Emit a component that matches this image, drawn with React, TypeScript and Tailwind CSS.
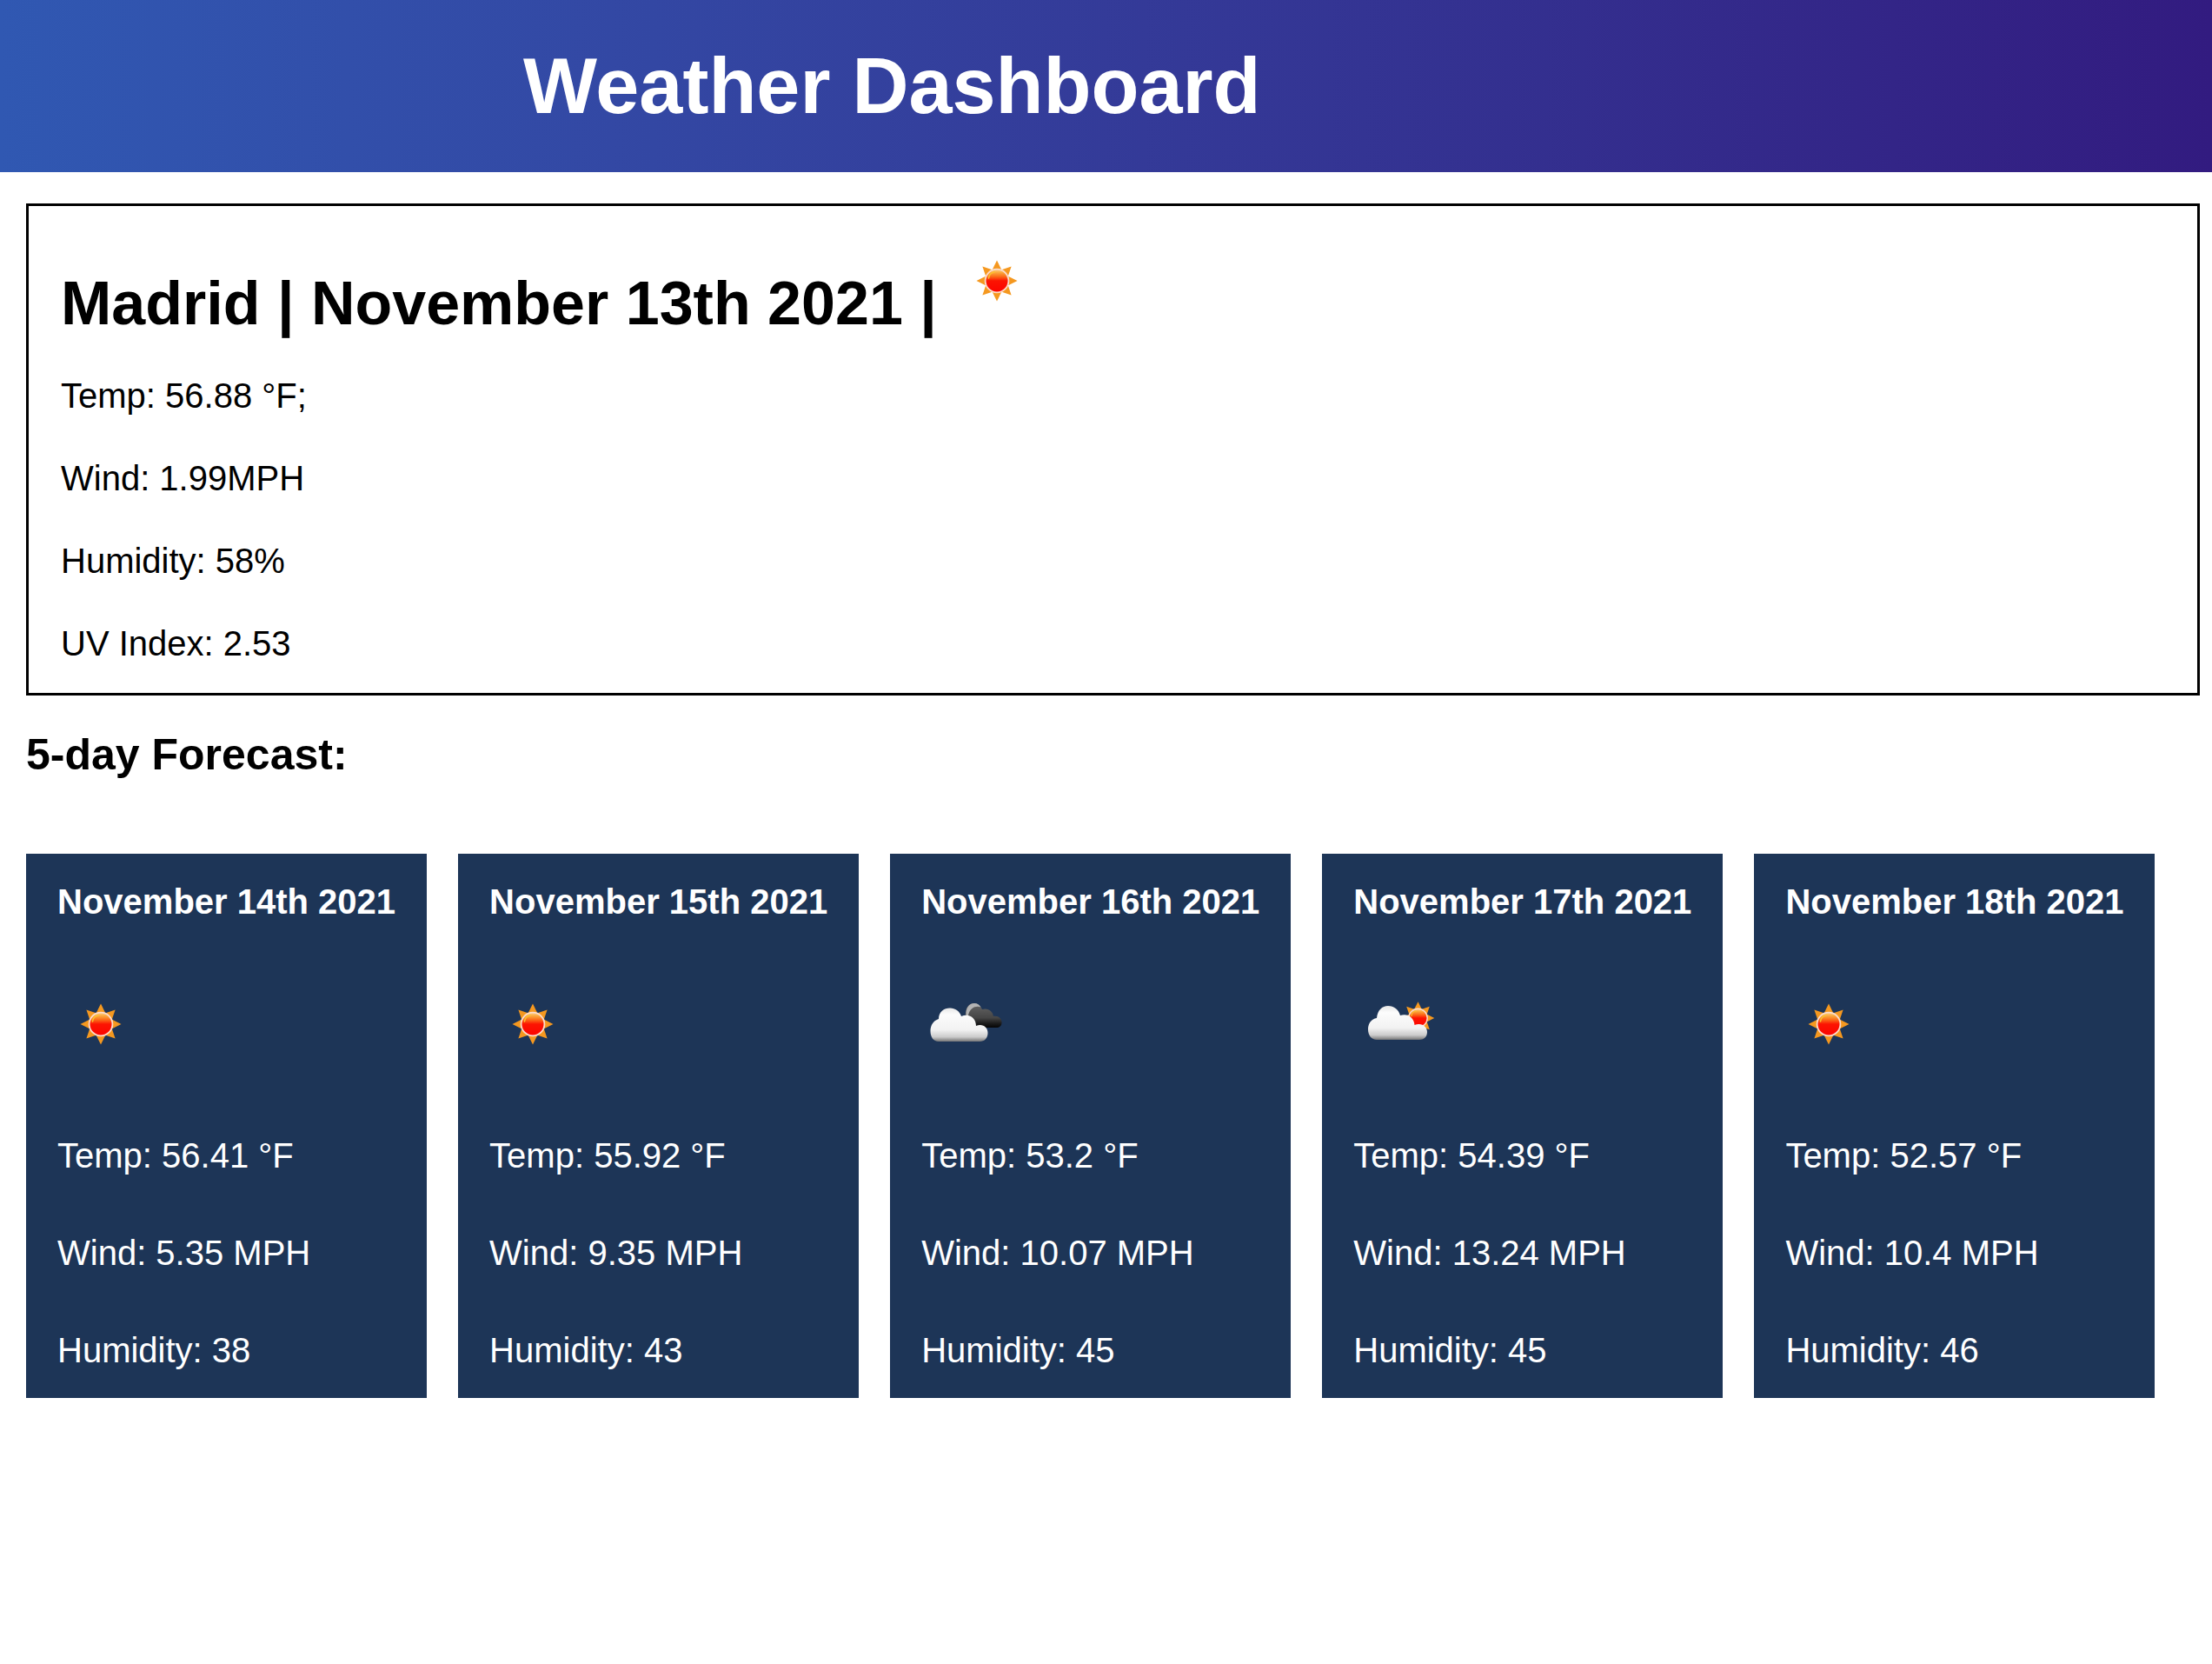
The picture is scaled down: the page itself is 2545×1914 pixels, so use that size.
type Condition = "clear" | "clouds" | "partly";

type Day = {
  date: string;
  condition: Condition;
  temp: string;
  wind: string;
  humidity: string;
};

const forecast: Day[] = [
  { date: "November 14th 2021", condition: "clear", temp: "56.41", wind: "5.35", humidity: "38" },
  { date: "November 15th 2021", condition: "clear", temp: "55.92", wind: "9.35", humidity: "43" },
  { date: "November 16th 2021", condition: "clouds", temp: "53.2", wind: "10.07", humidity: "45" },
  { date: "November 17th 2021", condition: "partly", temp: "54.39", wind: "13.24", humidity: "45" },
  { date: "November 18th 2021", condition: "clear", temp: "52.57", wind: "10.4", humidity: "46" },
];

const rays = [0, 45, 90, 135, 180, 225, 270, 315];

function Sun({ id }: { id: string }) {
  return (
    <g>
      <defs>
        <linearGradient id={id} x1="0" y1="0" x2="0" y2="1">
          <stop offset="0" stopColor="#fdd48a" />
          <stop offset="0.15" stopColor="#fba63c" />
          <stop offset="0.32" stopColor="#fb6a18" />
          <stop offset="0.5" stopColor="#fc1402" />
          <stop offset="1" stopColor="#fc0400" />
        </linearGradient>
      </defs>
      {rays.map((angle) => (
        <path key={angle} d="M-5.2 -13 L0 -23.5 L5.2 -13 Z" fill="#f5981f" transform={`rotate(${angle})`} />
      ))}
      <circle r="13.4" fill={`url(#${id})`} stroke="#fbdccb" strokeWidth="1.8" />
      <path d="M-9.5 -3 C-9 -7.5 -6 -9.5 -3 -10" fill="none" stroke="#fbc02e" strokeWidth="1.5" strokeLinecap="round" />
    </g>
  );
}

function WeatherIcon({ condition, id, className }: { condition: Condition; id: string; className: string }) {
  return (
    <svg viewBox="0 0 100 100" className={className} role="img" aria-label={condition}>
      <defs>
        <linearGradient id={`${id}-white`} x1="0" y1="0" x2="0" y2="1">
          <stop offset="0" stopColor="#e8e8e8" />
          <stop offset="0.2" stopColor="#fcfcfc" />
          <stop offset="0.65" stopColor="#f2f2f2" />
          <stop offset="0.86" stopColor="#cccccc" />
          <stop offset="1" stopColor="#777777" />
        </linearGradient>
        <linearGradient id={`${id}-dark`} x1="0" y1="0" x2="0" y2="1">
          <stop offset="0" stopColor="#666666" />
          <stop offset="0.6" stopColor="#454545" />
          <stop offset="0.82" stopColor="#1c1c1c" />
          <stop offset="1" stopColor="#050505" />
        </linearGradient>
      </defs>
      {condition === "clear" && (
        <g transform="translate(50 50)">
          <Sun id={`${id}-sun`} />
        </g>
      )}
      {condition === "clouds" && (
        <>
          <path
            d="M51 42 C50 32 54 26 61 26 C65 26 68 29 70 33 C77 31 82 35 83 41 C89 40 92.5 44 92.5 48 C92.5 52 90 54 86 54 L66 54 Z"
            fill={`url(#${id}-dark)`}
          />
          <path d="M51.5 40 C50.5 32 55 26 61 26 C64.500 26 67 28 68.500 30.500 C63 28.500 56 31 54 40 Z" fill="#b4b4b4" />
          <path
            d="M20 70 C14 70 10.5 65 10.5 58 C10.5 51 14 46 20 44 C20 36 26 31.5 33 31.5 C39 31.5 44 35 46 41 C55 37 63 43 63 52 C71 49 76.5 54 76.5 60 C76.5 66 73 70 67 70 Z"
            fill={`url(#${id}-white)`}
          />
        </>
      )}
      {condition === "partly" && (
        <>
          <g transform="translate(74.5 43) scale(0.8)">
            <Sun id={`${id}-sun`} />
          </g>
          <path
            d="M27 68 C21 68 17 63 17 56 C17 49 21 44 27 43 C28 34 33 29 40 29 C47 29 52 33 54 40 C62 37 70 42 70.5 51 C79 48 85 53 85 59 C85 65 81 68 76 68 Z"
            fill={`url(#${id}-white)`}
          />
        </>
      )}
    </svg>
  );
}

function ForecastCard({ day, id }: { day: Day; id: string }) {
  return (
    <article className="flex flex-col bg-[#1d3557] px-9 pt-8 pb-8 text-white">
      <h3 className="font-bold">{day.date}</h3>
      <WeatherIcon condition={day.condition} id={id} className="mt-[68px] mb-[78px] size-[100px]" />
      <div className="flex flex-col gap-[66px]">
        <p>Temp: {day.temp} °F</p>
        <p>Wind: {day.wind} MPH</p>
        <p>Humidity: {day.humidity}</p>
      </div>
    </article>
  );
}

export default function App() {
  return (
    <div className="bg-white font-['Liberation_Sans',Arial,sans-serif] text-[40px] leading-[46px] text-black">
      <header className="bg-linear-to-r from-[#3058b2] to-[#321b80] py-12 pl-[602px]">
        <h1 className="text-[90px] leading-[102px] font-bold text-white">Weather Dashboard</h1>
      </header>
      <main className="pt-9 pr-[14px] pl-[30px]">
        <section className="border-3 border-black px-[37px] pt-9 pb-[34px]">
          <h2 className="text-[70px] leading-[80px] font-bold">
            Madrid | November 13th 2021 |{" "}
            <WeatherIcon condition="clear" id="today" className="inline-block size-[100px] align-baseline" />
          </h2>
          <div className="mt-[43px] flex flex-col gap-[49px]">
            <p>Temp: 56.88 °F;</p>
            <p>Wind: 1.99MPH</p>
            <p>Humidity: 58%</p>
            <p>UV Index: 2.53</p>
          </div>
        </section>
        <h2 className="mt-10 text-[50px] leading-[56px] font-bold">5-day Forecast:</h2>
        <section className="mt-[86px] flex flex-wrap gap-9">
          {forecast.map((day, i) => (
            <ForecastCard key={day.date} day={day} id={`day-${i}`} />
          ))}
        </section>
      </main>
    </div>
  );
}
